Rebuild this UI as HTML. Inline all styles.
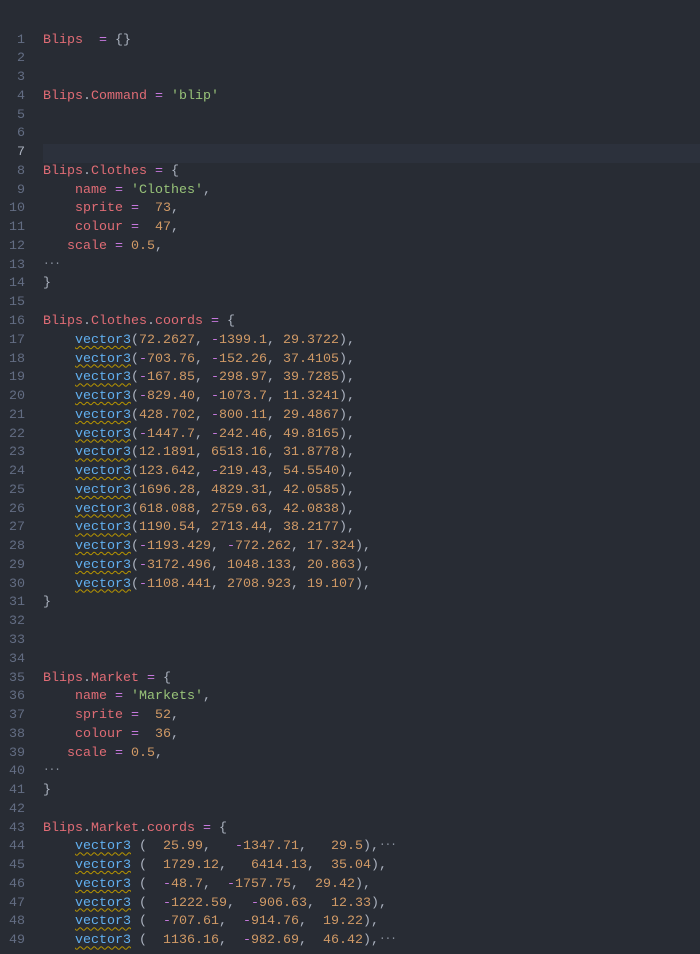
<!DOCTYPE html>
<html><head><meta charset="utf-8"><style>
html,body{margin:0;padding:0;background:#282c34;width:700px;height:954px;overflow:hidden}
.ed{position:absolute;top:31.5px;left:0;right:0;font-family:"Liberation Mono",monospace;font-size:13.33px;color:#abb2bf}
.l{height:18.77px;line-height:18.77px;white-space:pre;position:relative}
.n{position:absolute;left:0;width:25px;text-align:right;color:#636d83}
.c{position:absolute;left:43px}
.cur{background:#2c313c;margin-left:43px}
.cur .n{left:-43px;color:#abb2bf}
.cur .c{left:0}
.r{color:#e06c75}.p{color:#c678dd}.g{color:#98c379}.o{color:#d19a66}.b{color:#61afef;text-decoration:underline wavy #b89500;text-decoration-thickness:1px;text-underline-offset:2px}
.e{font-size:11px;position:relative;top:-4px;color:#8a919e;letter-spacing:-1px}
</style></head><body><div class="ed">
<div class="l"><span class="n">1</span><span class="c"><span class="r">Blips</span>  <span class="p">=</span> {}</span></div>
<div class="l"><span class="n">2</span></div>
<div class="l"><span class="n">3</span></div>
<div class="l"><span class="n">4</span><span class="c"><span class="r">Blips</span>.<span class="r">Command</span> <span class="p">=</span> <span class="g">'blip'</span></span></div>
<div class="l"><span class="n">5</span></div>
<div class="l"><span class="n">6</span></div>
<div class="l cur"><span class="n">7</span></div>
<div class="l"><span class="n">8</span><span class="c"><span class="r">Blips</span>.<span class="r">Clothes</span> <span class="p">=</span> {</span></div>
<div class="l"><span class="n">9</span><span class="c">    <span class="r">name</span> <span class="p">=</span> <span class="g">'Clothes'</span>,</span></div>
<div class="l"><span class="n">10</span><span class="c">    <span class="r">sprite</span> <span class="p">=</span>  <span class="o">73</span>,</span></div>
<div class="l"><span class="n">11</span><span class="c">    <span class="r">colour</span> <span class="p">=</span>  <span class="o">47</span>,</span></div>
<div class="l"><span class="n">12</span><span class="c">   <span class="r">scale</span> <span class="p">=</span> <span class="o">0.5</span>,</span></div>
<div class="l"><span class="n">13</span><span class="c"><span class="e">...</span></span></div>
<div class="l"><span class="n">14</span><span class="c">}</span></div>
<div class="l"><span class="n">15</span></div>
<div class="l"><span class="n">16</span><span class="c"><span class="r">Blips</span>.<span class="r">Clothes</span>.<span class="r">coords</span> <span class="p">=</span> {</span></div>
<div class="l"><span class="n">17</span><span class="c">    <span class="b">vector3</span>(<span class="o">72.2627</span>, <span class="p">-</span><span class="o">1399.1</span>, <span class="o">29.3722</span>),</span></div>
<div class="l"><span class="n">18</span><span class="c">    <span class="b">vector3</span>(<span class="p">-</span><span class="o">703.76</span>, <span class="p">-</span><span class="o">152.26</span>, <span class="o">37.4105</span>),</span></div>
<div class="l"><span class="n">19</span><span class="c">    <span class="b">vector3</span>(<span class="p">-</span><span class="o">167.85</span>, <span class="p">-</span><span class="o">298.97</span>, <span class="o">39.7285</span>),</span></div>
<div class="l"><span class="n">20</span><span class="c">    <span class="b">vector3</span>(<span class="p">-</span><span class="o">829.40</span>, <span class="p">-</span><span class="o">1073.7</span>, <span class="o">11.3241</span>),</span></div>
<div class="l"><span class="n">21</span><span class="c">    <span class="b">vector3</span>(<span class="o">428.702</span>, <span class="p">-</span><span class="o">800.11</span>, <span class="o">29.4867</span>),</span></div>
<div class="l"><span class="n">22</span><span class="c">    <span class="b">vector3</span>(<span class="p">-</span><span class="o">1447.7</span>, <span class="p">-</span><span class="o">242.46</span>, <span class="o">49.8165</span>),</span></div>
<div class="l"><span class="n">23</span><span class="c">    <span class="b">vector3</span>(<span class="o">12.1891</span>, <span class="o">6513.16</span>, <span class="o">31.8778</span>),</span></div>
<div class="l"><span class="n">24</span><span class="c">    <span class="b">vector3</span>(<span class="o">123.642</span>, <span class="p">-</span><span class="o">219.43</span>, <span class="o">54.5540</span>),</span></div>
<div class="l"><span class="n">25</span><span class="c">    <span class="b">vector3</span>(<span class="o">1696.28</span>, <span class="o">4829.31</span>, <span class="o">42.0585</span>),</span></div>
<div class="l"><span class="n">26</span><span class="c">    <span class="b">vector3</span>(<span class="o">618.088</span>, <span class="o">2759.63</span>, <span class="o">42.0838</span>),</span></div>
<div class="l"><span class="n">27</span><span class="c">    <span class="b">vector3</span>(<span class="o">1190.54</span>, <span class="o">2713.44</span>, <span class="o">38.2177</span>),</span></div>
<div class="l"><span class="n">28</span><span class="c">    <span class="b">vector3</span>(<span class="p">-</span><span class="o">1193.429</span>, <span class="p">-</span><span class="o">772.262</span>, <span class="o">17.324</span>),</span></div>
<div class="l"><span class="n">29</span><span class="c">    <span class="b">vector3</span>(<span class="p">-</span><span class="o">3172.496</span>, <span class="o">1048.133</span>, <span class="o">20.863</span>),</span></div>
<div class="l"><span class="n">30</span><span class="c">    <span class="b">vector3</span>(<span class="p">-</span><span class="o">1108.441</span>, <span class="o">2708.923</span>, <span class="o">19.107</span>),</span></div>
<div class="l"><span class="n">31</span><span class="c">}</span></div>
<div class="l"><span class="n">32</span></div>
<div class="l"><span class="n">33</span></div>
<div class="l"><span class="n">34</span></div>
<div class="l"><span class="n">35</span><span class="c"><span class="r">Blips</span>.<span class="r">Market</span> <span class="p">=</span> {</span></div>
<div class="l"><span class="n">36</span><span class="c">    <span class="r">name</span> <span class="p">=</span> <span class="g">'Markets'</span>,</span></div>
<div class="l"><span class="n">37</span><span class="c">    <span class="r">sprite</span> <span class="p">=</span>  <span class="o">52</span>,</span></div>
<div class="l"><span class="n">38</span><span class="c">    <span class="r">colour</span> <span class="p">=</span>  <span class="o">36</span>,</span></div>
<div class="l"><span class="n">39</span><span class="c">   <span class="r">scale</span> <span class="p">=</span> <span class="o">0.5</span>,</span></div>
<div class="l"><span class="n">40</span><span class="c"><span class="e">...</span></span></div>
<div class="l"><span class="n">41</span><span class="c">}</span></div>
<div class="l"><span class="n">42</span></div>
<div class="l"><span class="n">43</span><span class="c"><span class="r">Blips</span>.<span class="r">Market</span>.<span class="r">coords</span> <span class="p">=</span> {</span></div>
<div class="l"><span class="n">44</span><span class="c">    <span class="b">vector3</span> (  <span class="o">25.99</span>,   <span class="p">-</span><span class="o">1347.71</span>,   <span class="o">29.5</span>),<span class="e">...</span></span></div>
<div class="l"><span class="n">45</span><span class="c">    <span class="b">vector3</span> (  <span class="o">1729.12</span>,   <span class="o">6414.13</span>,  <span class="o">35.04</span>),</span></div>
<div class="l"><span class="n">46</span><span class="c">    <span class="b">vector3</span> (  <span class="p">-</span><span class="o">48.7</span>,  <span class="p">-</span><span class="o">1757.75</span>,  <span class="o">29.42</span>),</span></div>
<div class="l"><span class="n">47</span><span class="c">    <span class="b">vector3</span> (  <span class="p">-</span><span class="o">1222.59</span>,  <span class="p">-</span><span class="o">906.63</span>,  <span class="o">12.33</span>),</span></div>
<div class="l"><span class="n">48</span><span class="c">    <span class="b">vector3</span> (  <span class="p">-</span><span class="o">707.61</span>,  <span class="p">-</span><span class="o">914.76</span>,  <span class="o">19.22</span>),</span></div>
<div class="l"><span class="n">49</span><span class="c">    <span class="b">vector3</span> (  <span class="o">1136.16</span>,  <span class="p">-</span><span class="o">982.69</span>,  <span class="o">46.42</span>),<span class="e">...</span></span></div>
</div></body></html>
